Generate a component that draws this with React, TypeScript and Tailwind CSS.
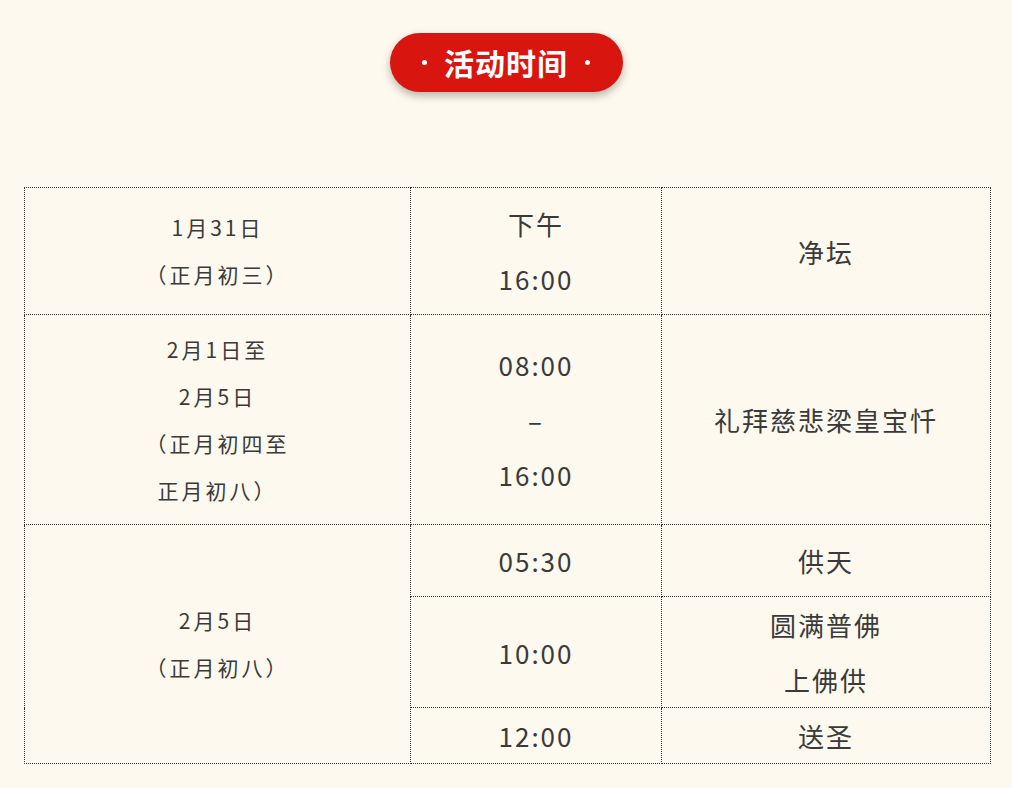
const font = { fontFamily: '"Noto Sans CJK SC", "Noto Sans", sans-serif' };

function Cell({
  children,
  className = '',
  rowSpan,
}: {
  children: React.ReactNode;
  className?: string;
  rowSpan?: number;
}) {
  return (
    <td
      rowSpan={rowSpan}
      className={`border border-dotted border-[#333] p-0 text-center align-middle ${className}`}
    >
      {children}
    </td>
  );
}

function DateText({ lines }: { lines: string[] }) {
  return (
    <div className="text-[21px] leading-[47px] tracking-[3px] text-[#3a3a3a]">
      {lines.map((l) => (
        <div key={l}>{l}</div>
      ))}
    </div>
  );
}

function BigText({ lines }: { lines: string[] }) {
  return (
    <div className="text-[26px] leading-[55px] tracking-[2px] text-[#3a3a3a]">
      {lines.map((l, i) => (
        <div key={i}>{l}</div>
      ))}
    </div>
  );
}

export default function App() {
  return (
    <div className="min-h-[788px] w-full bg-[#fdf9ee]" style={font}>
      <div className="flex justify-center pt-[33px]">
        <div className="flex h-[59px] w-[233px] items-center justify-center gap-[17px] rounded-full bg-[#d9150f] shadow-[0_4px_8px_rgba(0,0,0,0.28)]">
          <span className="h-[5px] w-[5px] rounded-full bg-white" />
          <span className="text-[30px] font-bold tracking-[1px] text-white">活动时间</span>
          <span className="h-[5px] w-[5px] rounded-full bg-white" />
        </div>
      </div>

      <div className="pl-[24px] pt-[95px]">
        <table className="w-[966px] table-fixed border-collapse">
          <colgroup>
            <col className="w-[386px]" />
            <col className="w-[251px]" />
            <col className="w-[329px]" />
          </colgroup>
          <tbody>
            <tr className="h-[127px]">
              <Cell>
                <DateText lines={['1月31日', '（正月初三）']} />
              </Cell>
              <Cell>
                <BigText lines={['下午', '16:00']} />
              </Cell>
              <Cell>
                <BigText lines={['净坛']} />
              </Cell>
            </tr>
            <tr className="h-[210px]">
              <Cell>
                <DateText lines={['2月1日至', '2月5日', '（正月初四至', '正月初八）']} />
              </Cell>
              <Cell>
                <BigText lines={['08:00', '–', '16:00']} />
              </Cell>
              <Cell>
                <BigText lines={['礼拜慈悲梁皇宝忏']} />
              </Cell>
            </tr>
            <tr className="h-[72px]">
              <Cell rowSpan={3}>
                <DateText lines={['2月5日', '（正月初八）']} />
              </Cell>
              <Cell>
                <BigText lines={['05:30']} />
              </Cell>
              <Cell>
                <BigText lines={['供天']} />
              </Cell>
            </tr>
            <tr className="h-[110px]">
              <Cell>
                <BigText lines={['10:00']} />
              </Cell>
              <Cell>
                <BigText lines={['圆满普佛', '上佛供']} />
              </Cell>
            </tr>
            <tr className="h-[56px]">
              <Cell>
                <BigText lines={['12:00']} />
              </Cell>
              <Cell>
                <BigText lines={['送圣']} />
              </Cell>
            </tr>
          </tbody>
        </table>
      </div>
    </div>
  );
}
